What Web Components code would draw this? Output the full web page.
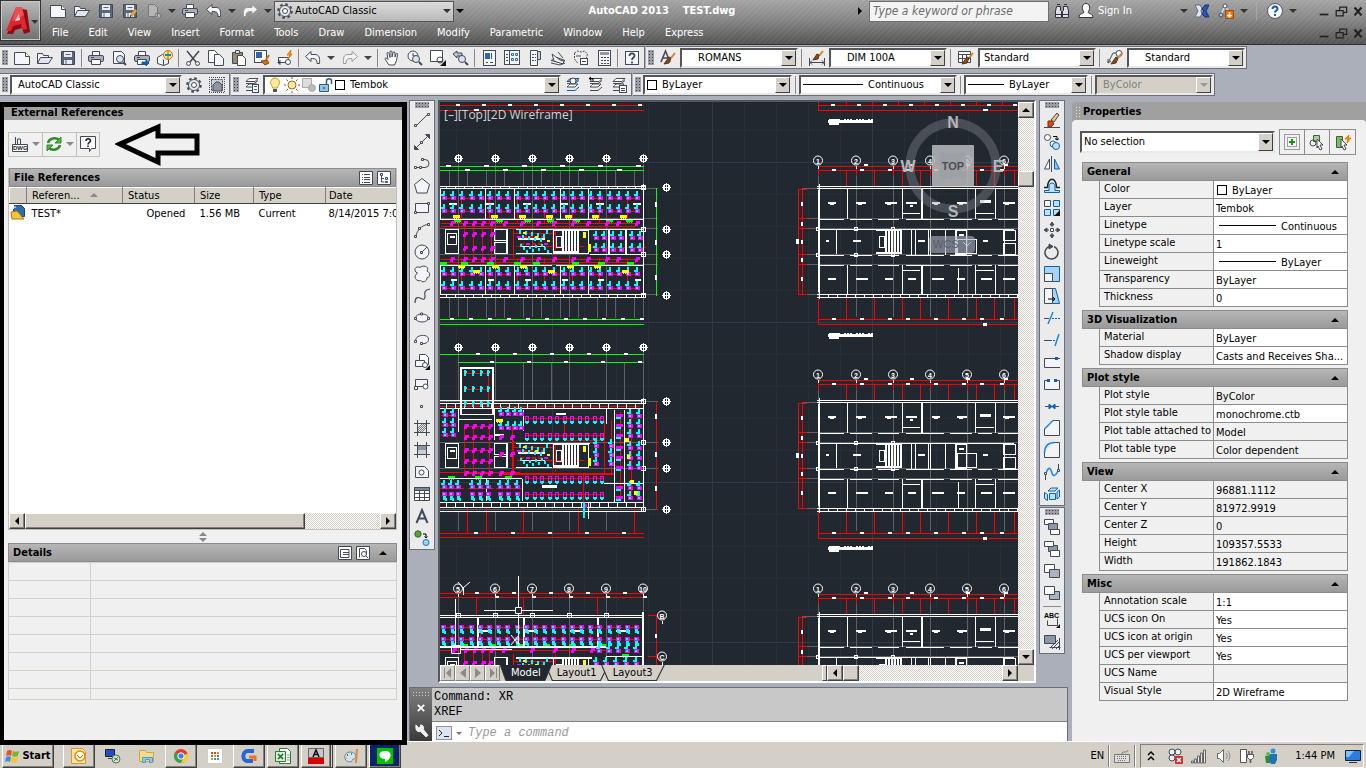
<!DOCTYPE html>
<html lang="en">
<head>
<meta charset="utf-8">
<title>AutoCAD 2013 - TEST.dwg</title>
<style>
  * { box-sizing: border-box; }
  body {
    margin: 0;
    height: 100vh;
    display: flex;
    flex-direction: column;
    overflow: hidden;
    background: #abafb9;
    color: #000;
    font: 11px/14px "DejaVu Sans Condensed", "Open Sans", "Liberation Sans", sans-serif;
  }
  .bars { display: flex; flex-direction: column; gap: 4px; padding-top: 1px; }
  .bar-row { display: flex; gap: 1px; height: 23px; }
  .work { flex: 1; display: flex; min-height: 0; gap: 2px; padding-top: 4px; }
  .center { flex: 1; min-width: 0; display: flex; flex-direction: column; gap: 4px; }
  .stage { flex: 1; min-height: 0; display: flex; gap: 3px; align-items: flex-start; padding-right: 5px; }
  .stack { display: flex; flex-direction: column; gap: 1px; }
  drawing-window { flex: 1; align-self: stretch; min-width: 0; }
  .line { display: inline-block; height: 1px; background: #000; }
  .swatch { display: inline-block; width: 10px; height: 10px; border: 1px solid #000; background: #fff; }
</style>
</head>
<body>

<title-bar></title-bar>

<div class="bars">
  <div class="bar-row">
    <tool-bar items="new open save | print preview publish dwf | cut copy paste match blockedit | undo v redo v | pan zoom zoomwin zoomprev | props dc palettes sheets markup calc | help"></tool-bar>
    <tool-bar>
      <cad-icon name="textstyle"></cad-icon>
      <combo-box label="Text style" value="ROMANS" style="width:118px;--indent:14px"></combo-box>
      <tool-sep></tool-sep>
      <cad-icon name="dimstyle"></cad-icon>
      <combo-box label="Dimension style" value="DIM 100A" style="width:118px;--indent:14px"></combo-box>
      <tool-sep></tool-sep>
      <cad-icon name="tablestyle"></cad-icon>
      <combo-box label="Table style" value="Standard" style="width:118px"></combo-box>
      <tool-sep></tool-sep>
      <cad-icon name="leaderstyle"></cad-icon>
      <combo-box label="Multileader style" value="Standard" style="width:118px;--indent:14px"></combo-box>
    </tool-bar>
  </div>
  <div class="bar-row">
    <tool-bar items="gear wsgear">
      <combo-box slot="start" label="Workspace" value="AutoCAD Classic" style="width:172px;--indent:4px"></combo-box>
    </tool-bar>
    <tool-bar items="laycur layprev laystate">
      <cad-icon slot="start" name="layers"></cad-icon>
      <combo-box slot="start" label="Layer" value="Tembok" style="width:298px">
        <cad-icon name="bulb"></cad-icon><cad-icon name="sun"></cad-icon><cad-icon name="freeze"></cad-icon><cad-icon name="lock"></cad-icon><span class="swatch"></span>
      </combo-box>
    </tool-bar>
    <tool-bar>
      <combo-box label="Color" value="ByLayer" style="width:149px;--indent:2px"><span class="swatch"></span></combo-box>
      <tool-sep></tool-sep>
      <combo-box label="Linetype" value="Continuous" style="width:158px"><span class="line" style="width:60px"></span></combo-box>
      <tool-sep></tool-sep>
      <combo-box label="Lineweight" value="ByLayer" style="width:124px"><span class="line" style="width:36px"></span></combo-box>
      <tool-sep></tool-sep>
      <combo-box label="Plot style" value="ByColor" disabled style="width:118px;--indent:4px"></combo-box>
    </tool-bar>
  </div>
</div>

<div class="work">
  <xref-palette></xref-palette>
  <div class="center">
    <div class="stage">
      <tool-bar vertical items="line xline pline polygon rect arc circle cloud spline ellipse earc insert block point hatch gradient region table text addsel"></tool-bar>
      <drawing-window></drawing-window>
      <div class="stack">
        <tool-bar vertical items="erase copyobj mirror offset array move rotate scale stretch trim extend breakpt break join chamfer fillet blend explode"></tool-bar>
        <tool-bar vertical items="front back above under | abc hatchback"></tool-bar>
      </div>
    </div>
    <command-line></command-line>
  </div>
  <properties-palette></properties-palette>
</div>

<task-bar></task-bar>

<script>
// ---------------------------------------------------------------- icons
const PAGE = '<path fill="#f4f6fa" d="M.5 2.5h11l4 4v8H.5z"/><path fill="#fff" d="M11.5 2.5v4h4"/>';
const DISK = '<path fill="#5a6578" d="M1.5 1.5h13v13h-13z"/><path fill="#e9edf3" stroke="none" d="M4 2h8v5H4zM4 10h8v4H4z"/><path d="M5.5 4.5h5M6 10v4" stroke="#5a6578"/>';
const PRINTER = '<path fill="#fff" d="M4.5 5.5v-4h7v4"/><rect x=".5" y="5.5" width="15" height="6" rx="1.5" fill="#a9b0bd"/><path fill="#fff" d="M3.5 9.5h9v5h-9zM3 7.5h3"/>';
const UNDO = '<path fill="#f2f4f8" d="M.5 6.5L6 1.500v3h4c4 0 5 3 4.5 9H12c0-4-1-5-6-5v3z"/>';
const MAG = '<circle cx="9" cy="9" r="3.5" fill="#d5e6f2"/><path stroke-width="2" d="M12 12l3 3"/>';
const BRUSH = '<path stroke="#d9822b" stroke-width="2" d="M15 3l-4 5"/><path fill="#8a4a1c" stroke="#5d3010" d="M11 8l-2-1-5 7 5-1z"/>';
const SHEETS = (top, mid, ink) => `<path fill="${top}" d="M5 1.5h9l-3 3H2z"/><path fill="${mid}" d="M3.5 8.5L5 7h8l-3 3H2z"/><path stroke="${ink}" d="M2 13.5h8l4-3.5M2 6.5h8l4-3"/>`;
const WINBOX = (inner) => `<rect x="2.5" y=".5" width="12" height="15" fill="#f4f6fa"/>${inner}`;
const GEAR = '<circle cx="8" cy="8" r="6.8" stroke-dasharray="2.7 2.64" stroke-width="2"/><circle cx="8" cy="8" r="5.5" fill="#e6e9ee"/><circle cx="8" cy="8" r="2.5" fill="#fff"/>';

const ICONS = {
  new: PAGE,
  open: '<path fill="#f2f4f8" d="M.5 13.5v-10h5l1 2h5v2"/><path fill="#e0e5ee" d="M.5 13.5l3-6h12l-4 6z"/>',
  save: DISK,
  saveas: DISK + '<path stroke="#e9a13a" stroke-width="3" d="M14 7l-5 6"/><path stroke="#5d3010" d="M8 15l1-3"/>',
  plotgray: '<path fill="#b5b5b5" stroke="#777" d="M2.5 1.5h6l3 3v9h-9zM10 10l5 1-1 4H8z"/>',
  print: PRINTER,
  preview: '<path fill="#f4f6fa" d="M2.5 13.5v-12h8l3 3v9z"/>' + MAG,
  publish: PRINTER + '<path fill="#0b62b5" stroke="#0b62b5" d="M8 12h4v-2l3 3-3 3v-2H8z"/>',
  dwf: '<path fill="#f4f6fa" d="M.5 7.5l5-3 6 3v6l-5 2-6-2z"/><path d="M6.5 9.5v6"/><circle cx="11" cy="5" r="4.5" fill="#ffe37a" stroke="#d66a20"/><path stroke="#1c7fd0" stroke-width="2" d="M8 5h6"/><path stroke="#2e9e3a" d="M11 1v8"/>',
  cut: '<path d="M2 1l9 11M14 1L5 12" stroke-width="1.5"/><circle cx="3.5" cy="13.5" r="2"/><circle cx="12.5" cy="13.5" r="2"/>',
  copy: '<path fill="#fff" d="M.5.5h6l3 3v9h-9z"/><path fill="#f4f6fa" d="M6.500 4.5h5l4 4v7h-9z"/>',
  paste: '<path fill="#9a8a72" d="M1.5 2.5h10v11h-10z"/><path fill="#ddd" d="M4.5.5h4v3h-4z"/><path fill="#fff" d="M6.5 5.5h5l3 3v7h-8z"/>',
  match: '<rect x=".5" y=".5" width="12" height="12" fill="#fff"/><path fill="#2c66b0" stroke="none" d="M2 2h6v6H2z"/><path stroke="#c9731f" stroke-width="2" d="M15 5l-3 5"/><path fill="#c9731f" stroke="#8a4a1c" d="M7 11l6-1 2 3-4 2z"/>',
  blockedit: '<path fill="#f4f6fa" d="M1.5 7.5h10v5h-10z"/><path d="M3 14.5l-2-2 2-2z" fill="#444"/><circle cx="11" cy="12" r="2.5" fill="#fff"/><path fill="#f7a21b" stroke="#e07800" d="M14 0l-4 5h3l-2 4 4-5h-2z"/>',
  undo: UNDO,
  redo: `<g transform="matrix(-1 0 0 1 16 0)" stroke="#999">${UNDO}</g>`,
  pan: '<path fill="#fff" d="M5 15L1 9c0-1 1-1.5 2-.5l1 1-1-6c0-1.5 1.5-1.5 2 0l1 4V2c0-1.5 2-1.5 2 0v5l1-4c0-1.5 2-1.5 2 0v4l1-3c.5-1 2-1 1.5.5l-1 6-2 4.5z"/>',
  zoom: '<circle cx="6" cy="6" r="5" fill="#f4f6fa"/><path d="M6 3v3h3"/>' + MAG,
  zoomwin: '<path fill="#fff" d="M.5.5h12v11H.5z"/><circle cx="10" cy="10" r="3"/><path fill="#111" stroke="none" d="M16 10v6h-6z"/>',
  zoomprev: '<path fill="#bcc2cd" d="M0 4l4-3v2h5v3H4v2z"/>' + MAG,
  props: WINBOX('<path fill="#2c66b0" stroke="none" d="M4 3h5v6H4z"/><path d="M10.5 3v6M5 12.5h2M9 12.5h3"/>'),
  dc: '<rect x=".5" y=".5" width="15" height="14" fill="#f4f6fa"/><path d="M5.5 1v13M2 4.5h2M2 7.5h2M2 10.5h2"/><path stroke="#2c66b0" d="M7.5 3.5h2v2h-2zM11.5 3.5h2v2h-2zM7.5 8.5h2v2h-2zM11.5 8.5h2v2h-2z"/>',
  palettes: '<path fill="#f4f6fa" d="M3.5.5h7v15h-7z"/><path fill="#ccd1da" d="M10.5 1.5h3v8h-3z"/><path d="M5 4.5h4M5 7.5h4M5 10.5h4" stroke-dasharray="2 1"/>',
  sheets: '<path fill="#dfe4ec" d="M1 10.5l9 2 5-2-8-3z"/><path fill="#f4f6fa" d="M2 4l8 6 4 1-1 3-9-3zM8 2l5 6"/><path d="M1 13l9 2 5-2"/>',
  markup: '<path stroke-dasharray="2 1" d="M1.5 3l3-2 4 1 3-1 3 3-1 4M1.5 3v6l3 4"/><rect x="7.5" y="8.5" width="7" height="6" fill="#fff"/><path d="M3 6h5M9 11.5h4"/>',
  calc: WINBOX('<path fill="#8d97a8" stroke="none" d="M4 2h9v3H4z"/><path stroke-dasharray="2 1" d="M5 7.5h8M5 10.5h8M5 13.5h8"/>'),
  help: '<rect x="1.5" y="1.5" width="13" height="13" fill="#f4f6fa"/><path stroke-width="1.8" d="M5.5 6c0-3.5 5-3.5 5 0 0 1.5-2.5 1.5-2.5 4M8 11.5v2"/>',
  textstyle: '<path stroke-width="1.6" d="M1 12L5.5 1 10 12M3 8h5"/>' + BRUSH,
  dimstyle: '<path d="M.5 8v8M15.5 8v8M1 12.5h14M3 10.5l-2 2 2 2M13 10.5l2 2-2 2"/><path stroke="#d9822b" stroke-width="2" d="M14 1l-4 5"/><path fill="#8a4a1c" stroke="#5d3010" d="M10 5L8 4l-4 6 5-1z"/>',
  tablestyle: '<path fill="#fff" d="M.5 1.5h12v11H.5z"/><path d="M.5 4.5h12M.5 8.5h12M4.5 4v9M8.5 4v9"/>' + BRUSH,
  leaderstyle: '<circle cx="12" cy="3.5" r="3" fill="#fff"/><path d="M9 3H6L1 13M1 9v4l3-2"/>' + BRUSH,
  gear: GEAR,
  wsgear: '<rect x="2.5" y="2.5" width="11" height="11" fill="#cdd2da" stroke-dasharray="2 1"/><path fill="#8e96a3" d="M4 14V8l3-3h3l3 3v6z"/><path stroke-dasharray="1 1" d="M0 .5h16M0 15.5h16M.5 0v16M15.5 0v16"/>',
  layers: SHEETS("#fff", "#fff", "#434a57") + '<rect x="8.5" y="7.5" width="6" height="8" fill="#fff"/><path stroke="#1c6fc4" d="M10 9.5h3M10 12.5h3"/>',
  laycur: SHEETS("#6fb6ee", "#fff", "#0b62b5") + '<circle cx="8" cy="4" r="3" fill="#eef3f8"/>',
  layprev: SHEETS("#fff", "#fff", "#434a57") + '<path stroke="#000" d="M5 4V1.5H1M3 0L1 1.5 3 3"/>',
  laystate: SHEETS("#fff", "#fff", "#434a57") + '<rect x="8.5" y="8.5" width="7" height="7" fill="#fff"/><path d="M10 11.5h4M10 13.5h4"/>',
  bulb: '<path fill="#ffe89a" stroke="#c79a28" d="M5.5 11c0-2-2-3-2-5.500a4.5 4.5 0 0 1 9 0c0 2.5-2 3.5-2 5.500z"/><path fill="#555" stroke="#444" d="M6.5 12.5h3v2h-3z"/>',
  sun: '<circle cx="8" cy="8" r="4" fill="#ffe89a" stroke="#8c7430"/><path stroke="#6b5a2a" d="M8 0v2M8 14v2M0 8h2M14 8h2M2.5 2.5L4 4M12 12l1.5 1.5M13.5 2.5L12 4M4 12l-1.5 1.5"/>',
  freeze: '<g stroke="#aaa"><path fill="#ddd" d="M1.5 1.5h9v9h-9z"/><circle cx="11" cy="11" r="3.5" fill="#bbb"/></g>',
  lock: '<path fill="#8fc6e8" stroke="#2b5f86" d="M1.5 7.5h9v7h-9z"/><path stroke="#2b5f86" stroke-width="1.5" d="M8.5 7V4c0-3 5-3 5 0v3"/><path stroke="#123" d="M6 10v2"/>',
  line: '<path d="M2.5 13.5l11-11"/><path fill="#fff" d="M.5 12.5h2v2h-2zM13.5 1.5h2v2h-2z"/>',
  xline: '<path d="M2 14L14 2"/><path fill="#434a57" d="M.5 15.5v-4l4 4zM15.5.5v4l-4-4z"/><path fill="#fff" d="M6.5 7.5h2v2h-2z"/>',
  pline: '<path d="M2 11.500h9a4 4 0 0 0 0-8H9"/><path fill="#fff" d="M.5 10.5h2v2h-2zM7.5 2.5h2v2h-2zM5.5 10.5h2v2h-2z"/>',
  polygon: '<path fill="#f2f4f7" d="M8 .5l7.500 6-2.5 8.500H3L.5 6.5z"/>',
  rect: '<path fill="#f2f4f7" d="M1.5 3.5h13v9h-13z"/><path fill="#fff" d="M.5 11.5h2v2h-2zM13.5 2.5h2v2h-2z"/>',
  arc: '<path d="M2 14C3 8 8 3 14 2.5"/><path fill="#fff" d="M.5 13.5h2v2h-2zM4.500 5.500h2v2h-2zM13.5 1.5h2v2h-2z"/>',
  circle: '<circle cx="8" cy="8" r="7" fill="#f2f4f7"/><path d="M8 8l5-5"/><path fill="#fff" d="M6.5 7.5h2v2h-2z"/>',
  cloud: '<path fill="#f2f4f7" d="M3.500 7C-1.500 5 1.5-1 6 1.500c3-3 10-1 7 3.500 4 1.500 3 7 0 6.500 0 5-5 5-6.500 3C3 16-2 11 3.500 7z"/>',
  spline: '<path d="M1 15c0-6 3-6 5-5s5 3 5-2c-1-4 0-6 5-7" stroke-width="1.2"/>',
  ellipse: '<ellipse cx="8" cy="8" rx="6.5" ry="4" fill="#f2f4f7"/><path fill="#fff" d="M.5 7.500h2v2h-2zM13.5 7.500h2v2h-2zM6.500 3h2v2h-2z"/>',
  earc: '<path fill="#f2f4f7" d="M2 9C0 3 14 1 14.5 7c0 4-4 5-7 4.5"/><path fill="#fff" d="M.5 8.500h2v2h-2zM6.5 10.5h2v2h-2z"/>',
  insert: '<path fill="#fff" d="M5.5.5h6l3 3v7h-9z"/><path fill="#f2f4f7" d="M1.5 6.5h9v6h-9z"/><circle cx="11" cy="11" r="2.5" fill="#fff"/><path fill="#111" stroke="none" d="M16 11v5h-5z"/>',
  block: '<path fill="#f2f4f7" d="M1.5 3.5h12v7h-12z"/><circle cx="11.5" cy="10.5" r="2.5" fill="#fff"/><path fill="#fff" d="M.5 10.5h3v3h-3z"/>',
  point: '<path fill="#fff" d="M6.500 7.500h2v2h-2z"/>',
  hatch: '<path d="M4 12l8-8M4 8l4-4M8 12l4-4M4 10l6-6M6 12l6-6" stroke="#777"/><path d="M3.5 0v16M12.5 0v16M0 3.5h16M0 12.5h16"/>',
  gradient: '<path fill="#8d95a1" d="M3.5 3.5h9v9h-9z"/><path fill="#c9ced6" stroke="none" d="M4 8h8v4H4z"/><path d="M3.5 0v16M12.5 0v16M0 3.5h16M0 12.5h16"/>',
  region: '<path fill="#f2f4f7" d="M1.5 2.5h9l4 4v7h-13z"/><circle cx="7.5" cy="8.5" r="2.5" fill="#fff"/>',
  table: '<path fill="#fff" d="M.5 1.5h15v13H.5z"/><path fill="#7d8694" d="M.5 1.5h15v3H.5z"/><path d="M.5 7.5h15M.5 11.5h15M5.5 4v10M10.5 4v10"/>',
  text: '<path stroke-width="2" d="M2.5 15L8 2l5.5 13M4.5 10.5h7"/>',
  addsel: '<circle cx="4" cy="4" r="3.2" fill="#5a9c46" stroke="#2f6b22"/><circle cx="12" cy="12.5" r="3" fill="#9fd2f5" stroke="#1c6fc4"/><path stroke="#000" d="M9 4h3v4M10.5 6.5L12 8l1.5-1.5"/>',
  erase: '<path d="M0 15.5h16"/><path fill="#f0c07a" d="M7 8l6-7 2 2-5 7z"/><path fill="#d8491c" stroke="#7a2a10" d="M4 9h4l2 3-3 3H4z"/>',
  copyobj: '<circle cx="3.5" cy="3.5" r="3" fill="#fff"/><circle cx="9" cy="10" r="3" stroke="#0b62b5" fill="#fff"/><circle cx="12" cy="12" r="3.5" stroke="#0b62b5" fill="#bfe0f8"/><path stroke="#000" d="M9 2.5h4V6M11 4.5L13 6l2-1.500"/>',
  mirror: '<path d="M7.5 0v16"/><path fill="#fff" d="M5.5 3v10H.5z"/><path stroke="#0b62b5" fill="#8cc4ee" d="M10.5 3v10h5z"/>',
  offset: '<path stroke="#222" stroke-width="1.5" d="M0 9.500h3.500c0-11 9-11 9 0H16"/><path stroke="#0b62b5" fill="#bfe0f8" d="M.5 14.5h15v-2H11V8c0-4-6-4-6 0v4.500H.5z"/>',
  array: '<path fill="#f2f4f7" d="M.5.5h6v6h-6z"/><path stroke="#0b62b5" fill="#bfe0f8" d="M9.5.5h6v6h-6zM.5 9.5h6v6h-6zM9.5 9.5h6v6h-6z"/><path fill="#111" stroke="none" d="M16 10v6h-6z"/>',
  move: '<path fill="#fff" d="M6.5 6.5h3v3h-3z"/><path fill="#434a57" d="M8 0l2 3H6zM8 16l2-3H6zM0 8l3-2v4zM16 8l-3-2v4z"/><path d="M8 2v3M8 11v3M2 8h3M11 8h3"/>',
  rotate: '<path stroke-width="1.5" d="M10 2.5a6.500 6.500 0 1 1-5 0"/><path fill="#434a57" d="M5 0l4 2.5L5 5z"/>',
  scale: '<path stroke="#0b62b5" fill="#a8d3f3" d="M.5.5h15v15H.5z"/><path fill="#f2f4f7" d="M.5 7.5h8v8h-8z"/>',
  stretch: '<path stroke="#0b62b5" fill="#a8d3f3" d="M8.5.5h3l4 15h-7z"/><path fill="#f2f4f7" d="M.5.5h8v15h-8z"/><path stroke="#000" d="M4 11h7M9 9l2 2-2 2"/>',
  trim: '<path d="M0 8.500h5"/><path stroke="#0b62b5" stroke-dasharray="2 1" d="M8 8.500h8"/><path stroke="#1c86e0" stroke-width="1.5" d="M4 14L9 2"/>',
  extend: '<path d="M0 8.500h6"/><path stroke="#0b62b5" stroke-dasharray="2 1" d="M6 8.500h5"/><path stroke="#1c86e0" stroke-width="1.5" d="M11 14l4-12"/>',
  breakpt: '<path fill="#f2f4f7" stroke="none" d="M0 4h16v10H0z"/><path d="M16 13.5H.5v-9H16"/><path fill="#0b62b5" stroke="none" d="M11 3h3v3h-3z"/>',
  break: '<path fill="#f2f4f7" stroke="none" d="M0 4h16v10H0z"/><path d="M4 4.5H.5v9h15v-9H12"/><path fill="#0b62b5" stroke="none" d="M3 3h3v3H3zM10 3h3v3h-3z"/>',
  join: '<path d="M1 8.5h14"/><path fill="#0b62b5" stroke="#0b62b5" d="M5 6l3 2.5L5 11zM11 6L8 8.5l3 2.5z"/>',
  chamfer: '<path fill="#f2f4f7" d="M9 .5h6.5v15H.5V9"/><path stroke="#1c86e0" stroke-width="1.5" d="M.5 9L9 .5"/>',
  fillet: '<path fill="#f2f4f7" d="M11 .5h4.5v15H.5V11"/><path stroke="#1c86e0" stroke-width="1.5" d="M.5 11C.5 4 4 .5 11 .5"/>',
  blend: '<path d="M1.500 16V9M14.500 0v7"/><path stroke="#1c86e0" stroke-width="1.5" d="M2 9c3-8 5-4 6 0s4 3 6-2"/><path fill="#fff" d="M.5 8.500h2v2h-2zM13.5 5.500h2v2h-2z"/>',
  explode: '<path stroke="#0b62b5" fill="#bfe0f8" d="M5.5 7.5h6v6h-6zM.5 6.500l3 2v6l-3-2zM13 6l2.500-2v7L13 13zM4 5l3-3h7l-3 3z"/>',
  front: '<path fill="#fff" d="M.5.5h9v5h-9zM9.5 10.5h6v5h-9v-5z"/><path fill="#8d97a8" d="M4.5 4.5h9v6h-9z"/>',
  back: '<path fill="#8d97a8" d="M4.5 4.5h9v6h-9z"/><path fill="#fff" d="M.5.5h9v5h-9zM6.5 9.5h9v6h-9z"/>',
  above: '<path fill="#fff" d="M.5 1.5h10v8H.5z"/><path fill="#aab2bf" d="M5.5 6.5h10v8h-10z"/>',
  under: '<path fill="#aab2bf" d="M5.5 6.5h10v8h-10z"/><path fill="#fff" d="M.5 1.5h10v8H.5z"/>',
  abc: '<path d="M3.5 8.5v5h10v-7"/><path fill="#111" stroke="none" d="M16 12v4h-4z"/><text x="0" y="6" font-size="7" font-weight="bold" fill="#000" stroke="none">ABC</text>',
  hatchback: '<path d="M6 14l8-8M8 15l7-7M12 15l3-3M5.5 13.5h11M15.5 4v12"/><path fill="#8d97a8" d="M.5 1.5h11v8H.5z"/>',
  binoc: '<path fill="#dde" stroke="#333" d="M2.5 3.5h4v4l1 1v6h-6V8zM13.5 3.5h-4v4l-1 1v6h6V8z"/><path stroke="#333" d="M3 1.5h3M10 1.5h3M2 11.5h5M9 11.5h5"/>',
  user: '<path fill="#fff" stroke="#333" d="M8 .5c5 0 4 7 2 8.500 0 2 5 1 5 5.500H1C1 10 6 11 6 9 4 7.5 3 .5 8 .5z"/>',
  exchange: '<path fill="#e4e8f0" stroke="#5b6a8a" d="M1 2h5l2 3-1 3 1 3-2 3H1l3-6z"/><path fill="#2d55b8" stroke="#16307c" d="M15 2h-4L8 6l2 2-2 3 3 3h4l-3-6z"/>',
  cloudapp: '<path stroke="#ddd" stroke-width="1.5" d="M3 12l4-9 4 6"/><circle cx="7" cy="3" r="2" fill="#fff"/><circle cx="3" cy="12" r="2" fill="#9cf"/><rect x="7.5" y="7.5" width="8" height="8" fill="#e8720c" stroke="#a54a00"/><path stroke="#fff" stroke-width="1.5" d="M11.5 9v5M9.5 12l2 2 2-2"/>',
  helpball: '<circle cx="8" cy="8" r="7.5" fill="#f6f8fb" stroke="#556"/><path stroke="#1b56b5" stroke-width="2" d="M5.5 6c0-3.5 5-3.5 5 0 0 1.5-2.5 1.5-2.5 3.5M8 11v2"/>',
  min: '<path stroke="#222" stroke-width="2" d="M3 12h10"/>',
  restore: '<path stroke="#222" stroke-width="1.4" d="M6.5 7V3.5h8v6H11M2.5 7.5h8v6h-8z"/>',
  close: '<path stroke="#222" stroke-width="2.5" d="M4 4l8 9M12 4l-8 9"/>',
  attach: '<path d="M3.5 1v8h5V3h-3v5"/><path fill="#fff" d="M.5 8.5h15v7H.5z"/><text x="1" y="14" font-size="6" font-weight="bold" fill="#222" stroke="none">DWG</text>',
  refresh: '<path stroke="#2f8a2a" stroke-width="2.5" d="M2 7c1-5 8-6 11-3M14 9c-1 5-8 6-11 3"/><path fill="#58b24a" stroke="#2f8a2a" d="M15 1v6H9zM1 15V9h6z"/>',
  balloon: '<path fill="#f8f9fb" d="M.5.5h15v12h-4l-2 3v-3h-9z"/><path stroke="#222" stroke-width="1.5" d="M6 5c0-3 4.5-3 4.5 0 0 1.5-2.5 1.5-2.5 3.5M8 9.5v1.500"/>',
  listview: '<path fill="#fff" d="M1.5 1.5h13v13h-13z"/><path d="M4 4.5h1M6 4.5h6M4 7.5h1M6 7.5h6M4 9.5h1M6 9.5h6M4 12.5h1M6 12.5h6"/>',
  tree: '<path fill="#fff" d="M1.5 1.5h13v13h-13z"/><path d="M4.5 3.5h2v2h-2zM5.5 6v6h3M6 8.5h2M9.5 7.5h2v2h-2zM9.5 11.5h2v1h-2z"/>',
  detail: '<path fill="#fff" d="M1.5 1.5h13v13h-13z"/><path d="M12 4.5H3.5v8H12zM6 7.5h6M6 9.5h6"/>',
  detailprev: '<path fill="#fff" d="M1.5 1.5h13v13h-13z"/><path d="M4.5 12.5v-9h5l2 2v4"/><circle cx="9" cy="9" r="2.5"/><path d="M11 11l2 2"/>',
  dwgfile: '<path fill="#2f6cae" stroke="#1b4474" d="M3.5 1.5h8l3 3v8h-11z"/><path fill="#f6c33a" stroke="#a8781a" d="M1 8l6-1 7 8H2z"/><path stroke="#fff" d="M1 3h5M3.5 1v4"/>',
  quick: '<rect x=".5" y=".5" width="15" height="15" stroke-dasharray="1 1"/><rect x="3.5" y="3.5" width="9" height="9" stroke-dasharray="1 1" fill="#fff"/><path stroke="#0a9a0a" stroke-width="2" d="M8 5v6M5 8h6"/>',
  selobj: '<path fill="#a8cf98" stroke="#2f6b22" d="M4.5 1.5h6v6h-6z"/><circle cx="4" cy="9" r="3"/><path fill="#fff" d="M8 5l6 6h-3l2 4-2 1-2-4-1 2z"/>',
  qselect: '<path fill="#7fb86a" stroke="#2f6b22" d="M1.5 2.5h6v11h-6z"/><path fill="#fff" d="M6 5l6 6H9l2 4-2 1-2-4-1 2z"/><path fill="#f7a21b" stroke="#e07800" d="M14 1l-4 4h3l-1 4 4-5h-3z"/>',
  prompt: '<rect x=".5" y="1.5" width="15" height="13" fill="#dde4ee" stroke="#8795aa"/><path stroke="#223" d="M3 5l3 3-3 3M8 11.5h5"/>',
  wrench: '<path fill="#f2f2f2" stroke="#f2f2f2" d="M2 2l3 3 2-1V2c3 0 4 3 3 5l5 6-2 2-6-6c-3 1-5-1-5-4z"/>',
  winflag: '<g stroke="none"><path fill="#e2552a" d="M2 3c2-1.500 3-1 5 0L6 8C4 7 3 7 1 8z"/><path fill="#76b82a" d="M8 3c2 1 4 1 6 0l-1 5c-2 1-4 1-6 0z"/><path fill="#3a8fd8" d="M1 9c2-1 3-1 5 0l-1 5c-2-1-3-1-5 0z"/><path fill="#f7c52c" d="M7 9c2 1 4 1 6 0l-1 5c-2 1-4 1-6 0z"/></g>',
  outlook: '<path fill="#fbe6a8" stroke="#d59a28" d="M.5.5h11l3 3v12H.5z"/><circle cx="9" cy="8" r="5" fill="#fff7df" stroke="#e08a1a" stroke-width="1.5"/><path stroke="#c96a10" d="M6 7l3 3 3-3"/>',
  remote: '<path fill="#1f4fc4" stroke="#223" d="M.5 1.5h9v7h-9z"/><path d="M3 10.5h5"/><circle cx="11" cy="11" r="4" fill="#cde8c8" stroke="#667"/><path stroke="#2f8a2a" d="M9 10l2 1-2 2M13 9l-2 2 2 1"/>',
  explorer: '<path fill="#f4dc8a" stroke="#caa648" d="M.5 2.5h6l1 2h7v9H.5z"/><path fill="#8fcbe8" stroke="#4d9ac4" d="M3.5 14.5v-5h10v5h-3v-3h-4v3z"/>',
  chrome: '<circle cx="8" cy="8" r="7" fill="#e23b2e" stroke="none"/><path fill="#f7cf2c" stroke="none" d="M8 8l7-2.5A7 7 0 0 1 8 15z"/><path fill="#36a64a" stroke="none" d="M8 8L2 4.5A7 7 0 0 0 8 15l2-4z"/><circle cx="8" cy="8" r="3.2" fill="#3d80e8" stroke="#fff"/>',
  apps: '<path fill="#fff" stroke="#ccc" d="M.5.5h15v15H.5z"/><path stroke="#e23b2e" stroke-width="2" d="M4 5h2M7 5h2"/><path stroke="#3d80e8" stroke-width="2" d="M10 8h2M10 11h2"/><path stroke="#36a64a" stroke-width="2" d="M4 8h2M7 11h2"/><path stroke="#f08c1c" stroke-width="2" d="M10 5h2M7 8h2M4 11h2"/>',
  gstar: '<path stroke="#2468d8" stroke-width="4" d="M13 3H7C1 3 1 13 6 13h6"/><path stroke="#f0701c" stroke-width="3" d="M8 9h6v4"/>',
  excel: '<path fill="#fff" stroke="#2f7a34" d="M4.5.5h8l3 3v12h-11z"/><path fill="#d6ecd6" stroke="#2f7a34" d="M.5 3.500h10v10H.5z"/><path stroke="#1c6a24" stroke-width="1.5" d="M3 6l5 5M8 6l-5 5"/><path stroke="#7ab87c" d="M12 7h3M12 9.5h3M12 12h3"/>',
  acad: '<path fill="#c8c8c8" stroke="#666" d="M.5.5h15v9H.5z"/><path fill="#d80000" stroke="none" d="M0 10h16v6H0z"/><path stroke="#111" stroke-width="1.5" d="M5 9l3-7 3 7M6 6.5h4"/>',
  paint: '<path fill="#cfe4f2" stroke="#5d8cad" d="M7 4C0 4 0 14 7 14c3 0 1-3 4-3s3-7-4-7z"/><path stroke="#d33" stroke-width="2" d="M4 7h1"/><path stroke="#3a3" stroke-width="2" d="M8 6h1"/><path stroke="#fb2" stroke-width="2" d="M3 10h1"/><path stroke="#d98a3a" stroke-width="2" d="M14 1l-1 14"/>',
  chat: '<path fill="#00c300" stroke="none" d="M0 0h16v16H0z"/><path fill="#fff" stroke="none" d="M8 3c8 0 7 8 0 11v-3C1 11 0 3 8 3z"/>',
  keyboard: '<path stroke="#777" d="M8 6c0-4 5 0 6-4"/><path fill="#ddd" stroke="#777" d="M.5 6.5h15v8H.5z"/><path stroke="#777" stroke-dasharray="1 1" d="M3 8.5h10M3 10.5h10M4 12.5h8"/>',
  chevrons: '<path stroke="#000" stroke-width="1.5" d="M5 7l3-3 3 3M5 12l3-3 3 3"/>',
  action: '<circle cx="5" cy="4" r="3" fill="#eee"/><circle cx="11" cy="4" r="3" fill="#eee"/><circle cx="5" cy="10" r="3" fill="#eee"/><rect x="8" y="8" width="8" height="8" rx="1" fill="#d9282a" stroke="none"/><path stroke="#fff" stroke-width="1.5" d="M10 10l4 4M14 10l-4 4"/>',
  signal: '<path fill="#e8e8e8" stroke="#666" d="M.5 13v2h2v-2zM3.5 11v4h2v-4zM6.5 8v7h2V8zM9.5 5v10h2V5zM12.5 2v13h2V2z"/>',
  speaker: '<path fill="#fff" stroke="#666" d="M2.5 5.5h2l4-4v13l-4-4h-2z"/><path stroke="#888" d="M11 5c1.5 2 1.5 4 0 6M13 3c2.5 4 2.5 6 0 10"/>',
  power: '<path fill="#fff" stroke="#555" d="M1.5 1.5h6v13h-6zM8.5 6.5h6v3l-2 2h-2l-2-2z"/><path stroke="#555" stroke-width="1.5" d="M10 3v3M13 3v3M11.5 12v3"/>',
  people: '<g stroke="none"><circle cx="10" cy="3" r="2.5" fill="#2f8fd0"/><path fill="#1c74b8" d="M6 6h8v6l-2 4H8l-2-4z"/><circle cx="5" cy="6" r="2" fill="#5db85a"/><path fill="#2f8a3a" d="M2 8h5v7H3z"/></g>',
  desktop: '<path fill="#2c7be0" stroke="#123" d="M.5 2.5h15v10H.5z"/><path fill="#7fc0ff" stroke="none" d="M1 3h8l-5 6H1z"/><path stroke="#333" d="M4 14.5h8"/>',
};

class CadIcon extends HTMLElement {
  constructor() {
    super();
    this.attachShadow({ mode: "open" });
  }

  connectedCallback() {
    this.shadowRoot.innerHTML = `
      <style>
        :host { display: inline-flex; width: 16px; height: 16px; flex: none; }
        svg { width: 100%; height: 100%; overflow: visible; font-family: "Liberation Sans", sans-serif; }
      </style>
      <svg viewBox="0 0 16 16" fill="none" stroke="#434a57" aria-hidden="true">${ICONS[this.getAttribute("name")] || ""}</svg>
    `;
  }
}
customElements.define("cad-icon", CadIcon);

const icon = (name) => `<cad-icon name="${name}"></cad-icon>`;

class ToolSep extends HTMLElement {
  constructor() {
    super();
    this.attachShadow({ mode: "open" }).innerHTML = `
      <style>
        :host { display: block; flex: none; width: 1px; height: 18px; margin: 0 3px; background: #8a8a8a; }
      </style>
    `;
  }
}
customElements.define("tool-sep", ToolSep);

// ---------------------------------------------------------------- toolbars
class ToolBar extends HTMLElement {
  constructor() {
    super();
    this.attachShadow({ mode: "open" });
  }

  connectedCallback() {
    const items = (this.getAttribute("items") || "").split(" ").filter(Boolean);
    const html = items.map((name) => {
      if (name === "|") return '<i class="sep"></i>';
      if (name === "v") return '<button class="more" aria-label="History"><i></i></button>';
      return `<button aria-label="${name}">${icon(name)}</button>`;
    }).join("");

    this.shadowRoot.innerHTML = `
      <style>
        :host {
          display: flex;
          flex: none;
          align-items: center;
          box-sizing: border-box;
          background: #ebebeb;
          border: 1px solid #6c6e74;
          border-left-width: 0;
          padding-right: 1px;
        }
        .grip {
          align-self: stretch;
          box-sizing: border-box;
          width: 10px;
          flex: none;
          background: radial-gradient(circle, #3c3e44 30%, transparent 45%) 0 0 / 3px 3px content-box #9c9ea8;
          padding: 3px 2px;
        }
        button {
          display: flex;
          align-items: center;
          justify-content: center;
          width: 23px;
          height: 21px;
          padding: 0;
          border: 0;
          background: none;
        }
        button:hover { background: #cfe0f2; }
        .more { width: 14px; }
        .more i { border: 4px solid transparent; border-top-color: #444; border-bottom-width: 0; }
        .sep { width: 1px; height: 18px; margin: 0 2px; background: #8a8a8a; }
        ::slotted(cad-icon) { margin: 0 4px; }
        ::slotted(cad-icon[slot]) { margin: 0 3px; }
        :host([vertical]) { flex-direction: column; width: 26px; border-left-width: 1px; padding: 0; }
        :host([vertical]) .grip { width: auto; height: 8px; padding: 1px 5px; }
        :host([vertical]) button { height: 22px; }
        :host([vertical]) .sep { width: 18px; height: 1px; margin: 2px 0; }
      </style>
      <div class="grip"></div>
      <slot name="start"></slot>
      <slot></slot>
      ${html}
    `;
  }
}
customElements.define("tool-bar", ToolBar);

class ComboBox extends HTMLElement {
  constructor() {
    super();
    this.attachShadow({ mode: "open" });
  }

  connectedCallback() {
    this.shadowRoot.innerHTML = `
      <style>
        :host {
          display: flex;
          align-items: center;
          flex: none;
          height: 20px;
          box-sizing: border-box;
          padding-left: 2px;
          background: #fff;
          border: 2px solid;
          border-color: #55565a #e9e9e9 #e9e9e9 #55565a;
        }
        select {
          flex: 1;
          min-width: 0;
          appearance: none;
          border: 0;
          padding: 0 0 0 var(--indent, 2px);
          background: none;
          color: inherit;
          font: inherit;
          outline: 0;
        }
        .drop {
          width: 15px;
          align-self: stretch;
          box-sizing: border-box;
          display: flex;
          align-items: center;
          justify-content: center;
          pointer-events: none;
          background: #d4d0c8;
          border: 1px solid;
          border-color: #fff #404040 #404040 #fff;
        }
        .drop i { border: 4px solid transparent; border-top-color: #000; border-bottom-width: 0; }
        ::slotted(*) { flex: none; margin-right: 3px; }
        ::slotted(cad-icon) { margin-right: 1px; }
        :host([disabled]) { background: #d4d0c8; color: #808080; }
        :host([disabled]) select { opacity: 1; }
        :host([disabled]) .drop i { border-top-color: #999; }
      </style>
      <slot></slot>
      <select aria-label="${this.getAttribute("label")}" ${this.hasAttribute("disabled") ? "disabled" : ""}>
        <option>${this.getAttribute("value")}</option>
      </select>
      <span class="drop"><i></i></span>
    `;
  }
}
customElements.define("combo-box", ComboBox);

// ---------------------------------------------------------------- title and menu
const MENUS = ["File", "Edit", "View", "Insert", "Format", "Tools", "Draw", "Dimension", "Modify", "Parametric", "Window", "Help", "Express"];

class TitleBar extends HTMLElement {
  constructor() {
    super();
    this.attachShadow({ mode: "open" });
  }

  connectedCallback() {
    const btn = (name) => `<button aria-label="${name}">${icon(name)}</button>`;
    const wbtn = (name) => `<button class="win" aria-label="${name}">${icon(name)}</button>`;
    this.shadowRoot.innerHTML = `
      <style>
        * { box-sizing: border-box; }
        :host {
          display: flex;
          box-sizing: border-box;
          height: 45px;
          flex: none;
          color: #fff;
          background:
            repeating-linear-gradient(135deg, transparent 0 2px, rgba(255,255,255,.05) 2px 4px),
            linear-gradient(#a4a4a4, #858585 45%, #525252);
          border-bottom: 1px solid #2f3033;
        }
        button { display: flex; align-items: center; justify-content: center; padding: 0; border: 0; background: none; color: inherit; font: inherit; }
        .app {
          flex: none;
          width: 41px;
          height: 41px;
          background: linear-gradient(#b9b9b9, #707070);
          border: 1px solid #333;
          box-shadow: inset 0 0 0 1px #c9c9c9;
        }
        .app svg { width: 36px; height: 32px; }
        .rows { flex: 1; min-width: 0; display: flex; flex-direction: column; }
        .row { display: flex; align-items: center; height: 22px; }
        .quick { display: flex; align-items: center; padding-left: 5px; }
        .quick button { width: 24px; height: 20px; }
        .quick .v, .info .v { width: 12px; }
        .v i, .ws i { border: 4px solid transparent; border-top-color: #333; border-bottom-width: 0; }
        .ws {
          display: flex;
          align-items: center;
          width: 180px;
          height: 21px;
          padding: 0 2px;
          border: 1px solid #555;
          background: linear-gradient(#dcdcdc, #b9b9b9);
          color: #000;
        }
        .ws select { flex: 1; min-width: 0; appearance: none; border: 0; padding: 0 0 0 2px; background: none; font: inherit; color: inherit; }
        .title { flex: 1; text-align: center; white-space: pre; font-weight: bold; }
        .info { display: flex; align-items: center; }
        .info button { width: 24px; height: 20px; }
        .expand { border: 4px solid transparent; border-left-color: #000; border-right-width: 0; margin-right: 7px; }
        input {
          width: 180px;
          height: 21px;
          margin-right: 1px;
          padding: 0 3px;
          border: 1px solid #6f6f6f;
          background: #f3f3f3;
          font: italic 12px/14px "DejaVu Sans Condensed", "Open Sans", sans-serif;
        }
        input::placeholder { color: #6d6d6d; }
        a { color: #fff; text-decoration: none; width: 80px; }
        .rule { width: 1px; height: 18px; margin: 0 6px; background: #a8a8a8; }
        .info .win, .win { width: 17px; height: 20px; }
        .win cad-icon { width: 14px; height: 14px; }
        .gap { width: 16px; }
        nav { display: flex; flex: 1; padding-left: 1px; }
        nav button { padding: 0 10px; height: 20px; }
      </style>
      <button class="app" aria-label="Application menu">
        <svg viewBox="0 0 36 32">
          <path fill="#8e0d12" d="M4 29L15 3l9 2 3 22-6 2-2-6-7 2-2 4z"/>
          <path fill="#e0262c" d="M3 26L13 2h6l5 22-5 1-1-6-8 2-2 5z"/>
          <path fill="#f7f0f0" d="M12 16l4-8 1 7z"/>
          <path fill="#f26a6a" d="M13 2h6l2 8c-4 2-8 5-12 6z" opacity=".6"/>
          <path fill="#333" d="M28 15h7l-3 4z"/>
        </svg>
      </button>
      <div class="rows">
        <div class="row">
          <div class="quick">
            ${["new", "open", "save", "saveas", "plotgray"].map(btn).join("")}
            <button class="v" aria-label="More"><i></i></button>
            ${btn("print")}${btn("undo")}
            <button class="v" aria-label="Undo list"><i></i></button>
            ${btn("redo")}
            <button class="v" aria-label="Redo list"><i></i></button>
            <span class="ws">${icon("gear")}<select aria-label="Workspace"><option>AutoCAD Classic</option></select><i></i></span>
            <button class="v" aria-label="Customize"><i style="border-top-color:#000"></i></button>
          </div>
          <div class="title">AutoCAD 2013    TEST.dwg</div>
          <div class="info">
            <i class="expand"></i>
            <input aria-label="Search" placeholder="Type a keyword or phrase">
            ${btn("binoc")}${btn("user")}
            <a href="#">Sign In</a>
            <button class="v" aria-label="Account"><i></i></button>
            ${btn("exchange")}${btn("cloudapp")}
            <button class="v" aria-label="Apps"><i></i></button>
            <i class="rule"></i>
            ${btn("helpball")}
            <button class="v" aria-label="Help list"><i></i></button>
            <span class="gap"></span>${wbtn("min")}${wbtn("restore")}${wbtn("close")}
          </div>
        </div>
        <div class="row">
          <nav>${MENUS.map((m) => `<button>${m}</button>`).join("")}</nav>
          ${wbtn("min")}${wbtn("restore")}${wbtn("close")}
        </div>
      </div>
    `;
  }
}
customElements.define("title-bar", TitleBar);

// ---------------------------------------------------------------- scrollbars
class ScrollStrip extends HTMLElement {
  constructor() {
    super();
    this.attachShadow({ mode: "open" });
    this.shadowRoot.innerHTML = `
      <style>
        :host {
          display: flex;
          height: 16px;
          background: repeating-conic-gradient(#fff 0 25%, #d4d0c8 0 50%) 0 0 / 2px 2px;
        }
        :host([vertical]) { flex-direction: column; width: 16px; height: auto; }
        button, .thumb { flex: none; box-sizing: border-box; padding: 0; width: 16px; height: 16px; background: #d4d0c8; border: 1px solid; border-color: #fff #404040 #404040 #fff; box-shadow: inset -1px -1px #808080; display: flex; align-items: center; justify-content: center; }
        .before { flex: none; height: var(--before, 0); }
        .thumb { width: var(--thumb, 16px); }
        :host([vertical]) .thumb { width: 16px; }
        .fill { flex: 1; }
        svg { width: 8px; height: 8px; }
        :host([vertical]) svg { transform: rotate(90deg); }
      </style>
      <button aria-label="Scroll back"><svg viewBox="0 0 8 8"><path d="M6 0v8L2 4z"/></svg></button>
      <span class="before"></span><span class="thumb"></span><span class="fill"></span>
      <button aria-label="Scroll forward"><svg viewBox="0 0 8 8"><path d="M2 0v8l4-4z"/></svg></button>
    `;
  }
}
customElements.define("scroll-strip", ScrollStrip);

// ---------------------------------------------------------------- External References
class XrefPalette extends HTMLElement {
  constructor() {
    super();
    this.attachShadow({ mode: "open" });
  }

  connectedCallback() {
    this.shadowRoot.innerHTML = `
      <style>
        * { box-sizing: border-box; }
        :host {
          position: relative;
          z-index: 1;
          flex: none;
          width: 407px;
          box-sizing: border-box;
          margin: 2px 0 -4px;
          display: flex;
          flex-direction: column;
          background: #f0f0f0;
          border: 5px solid #000;
          border-left-width: 4px;
        }
        h2, h3 { margin: 0; font-size: 11px; font-weight: bold; }
        h2 { padding-left: 7px; height: 13px; line-height: 11px; background: #a0a0a0; }
        h3 {
          display: flex;
          align-items: center;
          gap: 2px;
          height: 19px;
          padding: 0 3px 0 4px;
          background: linear-gradient(#b6b6b6, #9a9a9a);
          border: 1px solid #8c8c8c;
        }
        h3 span { flex: 1; }
        button { display: flex; align-items: center; justify-content: center; padding: 0; border: 0; background: none; }
        .tools { display: flex; align-items: center; padding: 2px 0 2px 4px; }
        .tools button { height: 25px; width: 24px; border: 1px solid #c4c0b6; border-right-width: 0; }
        .tools button:last-of-type { border-right-width: 1px; }
        .tools .wide { width: 34px; gap: 4px; }
        .wide i { border: 4px solid transparent; border-top-color: #888; border-bottom-width: 0; }
        .arrow { width: 86px; height: 44px; margin-left: 15px; }
        .files { flex: 1; min-height: 0; display: flex; flex-direction: column; margin: 0 5px 0 4px; background: #fff; border: 1px solid #c4c0b6; border-top: 0; }
        .list { flex: 1; overflow: hidden; }
        table { border-collapse: collapse; table-layout: fixed; width: 100%; white-space: nowrap; }
        .list table { min-width: 388px; }
        th { height: 16px; padding: 0 0 0 5px; text-align: left; font-weight: normal; background: #d4d0c8; border: 1px solid; border-color: #fff #808080 #404040 #fff; }
        .list td { height: 18px; padding: 0 0 0 5px; }
        .list td:first-child { padding: 0; }
        .list td:last-child, th:last-child { padding-left: 3px; }
        th i { display: inline-block; margin: 0 0 2px 10px; border: 4px solid transparent; border-bottom-color: #888; border-top-width: 0; }
        .split { height: 13px; display: flex; flex-direction: column; align-items: center; justify-content: center; gap: 2px; }
        .split i { border: 4px solid transparent; border-bottom-color: #888; border-top-width: 0; }
        .split i + i { border-top: 4px solid #888; border-bottom: 0; }
        .details { margin: 0 5px 40px 4px; }
        .details td { height: 18px; border: 1px solid #d4d0c8; }
        .details tr:last-child td { height: 11px; }
        .up { width: 20px; }
        .up i { border: 4px solid transparent; border-bottom-color: #000; border-top-width: 0; }
      </style>
      <h2>External References</h2>
      <div class="tools">
        <button class="wide" aria-label="Attach DWG">${icon("attach")}<i></i></button>
        <button class="wide" aria-label="Refresh">${icon("refresh")}<i></i></button>
        <button aria-label="Help">${icon("balloon")}</button>
        <svg class="arrow" viewBox="0 0 86 44"><path fill="#f0f0f0" stroke="#000" stroke-width="5" d="M5 22L43 5v9h39v17H43v9z"/></svg>
      </div>
      <section class="files">
        <h3><span>File References</span><button aria-label="List view">${icon("listview")}</button><button aria-label="Tree view">${icon("tree")}</button></h3>
        <div class="list">
          <table>
            <colgroup><col style="width:17px"><col style="width:96px"><col style="width:72px"><col style="width:59px"><col style="width:72px"><col></colgroup>
            <thead><tr><th></th><th>Referen...<i></i></th><th>Status</th><th>Size</th><th>Type</th><th>Date</th></tr></thead>
            <tbody><tr><td>${icon("dwgfile")}</td><td>TEST*</td><td style="padding-left:24px">Opened</td><td>1.56 MB</td><td>Current</td><td>8/14/2015 7:0</td></tr></tbody>
          </table>
        </div>
        <scroll-strip style="--thumb:280px"></scroll-strip>
      </section>
      <div class="split"><i></i><i></i></div>
      <section class="details">
        <h3><span>Details</span><button aria-label="Details">${icon("detail")}</button><button aria-label="Preview">${icon("detailprev")}</button><button class="up" aria-label="Collapse"><i></i></button></h3>
        <table>
          <colgroup><col style="width:82px"><col></colgroup>
          <tbody>${"<tr><td></td><td></td></tr>".repeat(8)}</tbody>
        </table>
      </section>
    `;
  }
}
customElements.define("xref-palette", XrefPalette);

// ---------------------------------------------------------------- model space
const WHITE = "#ffffff", RED = "#ff0000", GREEN = "#00ff00", MAGENTA = "#ff00ff", CYAN = "#00ffff", YELLOW = "#ffff00";
const GRAY = "#5f6164", GRID = "#282e39", GRID_MAJOR = "#323949";
const LAYER_ORDER = [GRID, GRID_MAJOR, GRAY, RED, GREEN, WHITE, MAGENTA, CYAN, YELLOW];

class FloorPlans extends HTMLElement {
  constructor() {
    super();
    this.attachShadow({ mode: "open" });
    this.layers = {};
    this.extra = "";
  }

  box(c, x, y, w, h) {
    this.layers[c] = (this.layers[c] || "") + `<rect x="${Math.round(x)}" y="${Math.round(y)}" width="${w}" height="${h}"/>`;
  }
  h(c, x1, x2, y, t = 1) { this.box(c, x1, y, Math.round(x2) - Math.round(x1), t); }
  v(c, x, y1, y2, t = 1) { this.box(c, x, y1, t, y2 - y1); }
  frame(c, x, y, w, h) {
    this.h(c, x, x + w, y); this.h(c, x, x + w, y + h - 1);
    this.v(c, x, y, y + h); this.v(c, x + w - 1, y, y + h);
  }

  bubble(x, y, text) {
    this.extra += `<circle cx="${x}" cy="${y}" r="4.5"/><text x="${x}" y="${y + 3}">${text}</text>`;
    this.v(WHITE, x, y + 5, y + 8);
  }
  solidBubble(x, y) {
    this.box(WHITE, x - 2, y - 3, 5, 1); this.box(WHITE, x - 2, y + 3, 5, 1);
    this.box(WHITE, x - 3, y - 2, 2, 5); this.box(WHITE, x + 2, y - 2, 2, 5);
    this.h(WHITE, x - 4, x + 5, y); this.v(WHITE, x, y - 4, y + 5);
  }
  // workstation: magenta desk with a cyan seat above or below it
  desk(x, y, below) {
    this.box(MAGENTA, x, y, 5, 4);
    this.box(CYAN, x + 1, y + 1, 2, 2);
    if (below) { this.box(CYAN, x + 1, y + 4, 3, 4); this.box(CYAN, x + 3, y + 6, 2, 3); }
    else { this.box(CYAN, x + 1, y - 5, 2, 5); this.box(CYAN, x - 1, y - 2, 3, 2); }
  }
  chair(x, y) { this.box(MAGENTA, x, y, 4, 3); this.box(MAGENTA, x - 1, y + 2, 3, 3); }
  plant(x, y, c) { this.box(c, x, y, 7, 3); this.box(c, x + 1, y + 3, 1, 1); this.box(c, x + 3, y + 3, 1, 1); this.box(c, x + 5, y + 3, 1, 1); }

  stairs(x, y, w, h) {
    for (let i = 0; i < w; i += 3) this.v(WHITE, x + i, y, y + h, 2);
    this.h(WHITE, x - 9, x + w, y); this.h(WHITE, x - 9, x + w, y + h - 2, 2);
    this.frame(WHITE, x - 6, y + 6, 6, 12);
  }

  grid() {
    for (let x = 456; x < 1900; x += 32) this.v((x - 552) % 160 ? GRID : GRID_MAJOR, x, 100, 1400);
    for (let y = 130; y < 1400; y += 32) this.h((y - 162) % 160 ? GRID : GRID_MAJOR, 440, 1900, y);
  }

  // offices without furniture; repeats down the right side of the sheet
  emptyFloor(d) {
    const cols = [818, 856, 893, 930, 967, 1004];
    const bays = [846, 874, 902, 920, 948, 976, 994, 1014];
    cols.forEach((x, i) => {
      this.bubble(x, 160.5 + d, i + 1);
      this.v(GRAY, x, 170 + d, 317 + d);
      this.v(RED, x, 166 + d, 176 + d);
    });
    [166, 170, 319, 324].forEach((y) => this.h(RED, 818, 1040, y + d));
    this.v(RED, 818, 298 + d, 325 + d);
    bays.forEach((x, i) => {
      this.v(RED, x, 170 + d, 186 + d);
      this.v(RED, x, 298 + d, 319 + d);
      this.box(WHITE, x - 14, 169 + d, 4, 2);
      this.box(WHITE, x - 14, 318 + d, 4, 2);
      if (i % 2) this.box(WHITE, x - 10, 164 + d, 4, 2);
    });
    this.box(WHITE, 983, 323 + d, 4, 3);
    [188, 218, 228, 254, 264, 294].forEach((y) => this.h(GRAY, 802, 1040, y + d));
    this.v(RED, 798, 189 + d, 295 + d); this.v(RED, 802, 189 + d, 295 + d);
    [189, 218, 228, 254, 264, 294].forEach((y) => this.h(RED, 798, 807, y + d));
    [202, 222, 240, 258, 277].forEach((y) => this.box(WHITE, 801, y + d, 2, 4));
    this.box(WHITE, 796, 239 + d, 3, 5);
    // outer walls
    [186, 188, 294, 297].forEach((y) => this.h(WHITE, 817, 1040, y + d));
    this.v(WHITE, 819, 184 + d, 299 + d); this.v(WHITE, 818, 190 + d, 292 + d);
    for (let x = 828; x < 1040; x += 9) this.v(WHITE, x, 294 + d, 298 + d);
    // rooms
    [847, 902, 921, 975, 995].forEach((x, i) => {
      const t = i === 2 ? 2 : 1;
      this.v(WHITE, x, 189 + d, 219 + d, t);
      this.v(WHITE, x, 265 + d, 294 + d, t);
    });
    this.v(WHITE, 958, 268 + d, 294 + d);
    [[819, 844], [850, 872], [878, 899], [906, 944], [950, 972], [978, 992], [998, 1040]].forEach(([a, b]) => {
      this.h(WHITE, a, b, 219 + d); this.h(WHITE, a, b, 265 + d); this.h(WHITE, a, b, 255 + d);
    });
    this.h(WHITE, 819, 1014, 229 + d);
    this.h(WHITE, 902, 920, 213 + d); this.h(WHITE, 976, 994, 213 + d);
    this.h(WHITE, 902, 920, 270 + d); this.h(WHITE, 976, 994, 270 + d);
    [828, 856, 885, 932, 957, 1003].forEach((x, i) => {
      this.box(WHITE, x, 202 + d, 8 + (i % 3) * 2, 2); this.box(WHITE, x + 2, 204 + d, 4, 1);
      this.box(WHITE, x, 278 + d, 8 + (i % 2) * 4, 2);
    });
    this.box(WHITE, 906, 202 + d, 11, 2); this.box(WHITE, 910, 205 + d, 3, 2);
    this.box(WHITE, 980, 200 + d, 11, 3);
    this.box(WHITE, 908, 278 + d, 8, 2); this.box(WHITE, 981, 278 + d, 11, 2);
    // service core
    this.v(WHITE, 836, 229 + d, 254 + d);
    this.stairs(885, 230 + d, 16, 24);
    [911, 915, 928, 930, 945].forEach((x) => this.v(WHITE, x, 229 + d, 255 + d));
    this.box(WHITE, 918, 240 + d, 7, 2); this.box(WHITE, 853, 240 + d, 8, 2); this.box(WHITE, 826, 240 + d, 3, 2); this.box(WHITE, 983, 240 + d, 5, 2);
    this.frame(WHITE, 955, 230 + d, 12, 25); this.v(WHITE, 956, 230 + d, 254 + d);
    this.frame(WHITE, 957, 239 + d, 20, 15); this.box(WHITE, 959, 234 + d, 5, 2);
    this.frame(WHITE, 1003, 230 + d, 13, 11); this.frame(WHITE, 1003, 243 + d, 13, 12); this.v(WHITE, 1004, 230 + d, 254 + d);
    cols.slice(0, 3).forEach((x) => [227, 253].forEach((y) => this.frame(WHITE, x - 2, y + d, 4, 4)));
  }

  sheetTitle(y) {
    this.h(WHITE, 828, 873, y, 3);
    for (let i = 0; i < 15; i++) if (i % 4) this.box(WHITE, 829 + i * 3, y - 1, 2, 4);
    this.box(WHITE, 829, y - 1, 10, 6);
  }

  // walls, dimensions and column grid shared by the left side
  leftShell(d, dim, stub) {
    const cols = [458, 495, 532, 569, 606, 643];
    cols.forEach((x) => this.v(GRAY, x, 164 + d, 317 + d));
    [449, 467, 486, 504, 523, 541, 560, 578, 597, 615, 634].forEach((x, i) => {
      this.v(i % 3 ? GRAY : stub, x, 170 + d, 186 + d);
      this.v(GRAY, x, 298 + d, 318 + d);
    });
    for (let x = 446; x < 640; x += 19) { this.box(WHITE, x, 165 + d + (x % 2) * 4, 5, 2); this.box(WHITE, x + 4, 318 + d, 4, 2); }
    [188, 218, 228, 254, 264, 294].forEach((y) => this.h(GRAY, 440, 658, y + d));
    [186, 188, 294, 297].forEach((y) => this.h(WHITE, 440, 645, y + d));
    for (let x = 446; x < 643; x += 9) { this.v(WHITE, x, 186 + d, 189 + d); this.v(WHITE, x, 294 + d, 298 + d); }
    this.v(WHITE, 643, 184 + d, 298 + d);
    this.v(dim, 656, 188 + d, 296 + d);
    [202, 240, 275].forEach((y) => this.box(WHITE, 655, y + d, 2, 5));
    [187, 229, 254, 295].forEach((y) => this.frame(WHITE, 641, y - 2 + d, 5, 5));
  }

  core(d) {
    this.frame(WHITE, 445, 229 + d, 14, 25); this.frame(WHITE, 447, 233 + d, 10, 12); this.box(WHITE, 450, 236 + d, 5, 2);
    this.frame(WHITE, 494, 229 + d, 14, 12); this.frame(WHITE, 494, 242 + d, 14, 12); this.v(WHITE, 506, 229 + d, 253 + d, 2);
    this.h(WHITE, 516, 552, 229 + d); this.h(WHITE, 516, 552, 253 + d); this.h(WHITE, 518, 545, 238 + d, 2); this.h(WHITE, 520, 545, 246 + d);
    this.stairs(562, 230 + d, 16, 23);
    this.h(WHITE, 552, 590, 229 + d); this.frame(WHITE, 553, 230 + d, 36, 24); this.box(YELLOW, 583, 232 + d, 3, 6); this.box(YELLOW, 588, 244 + d, 3, 8);
    for (let i = 0; i < 10; i++) {
      this.box(CYAN, 519 + i * 3, 230 + d + (i * 5) % 9, 2, 4); this.box(CYAN, 520 + i * 3, 244 + d + (i * 3) % 7, 2, 3);
      this.box(i % 3 ? RED : MAGENTA, 517 + i * 3, 236 + d + (i * 7) % 14, 4, 2);
      if (i % 4 === 1) this.box(YELLOW, 520 + i * 3, 231 + d + i, 3, 2);
    }
    this.h(RED, 513, 555, 233 + d); this.v(RED, 513, 226 + d, 258 + d); this.h(RED, 517, 584, 246 + d); this.v(RED, 555, 226 + d, 258 + d);
  }

  furnishedFloor() {
    [458, 495, 532, 569, 606, 643].forEach((x) => this.solidBubble(x, 158));
    this.leftShell(0, GREEN, GRAY);
    [166, 170, 319, 324].forEach((y) => this.h(GREEN, 440, 644, y));
    [187, 229, 254, 295].forEach((y) => this.solidBubble(666, y));
    [[440, 552], [556, 644]].forEach(([a, b]) => { this.h(WHITE, a, b, 219); this.h(WHITE, a, b, 265); });
    [440, 485, 514, 560, 588].forEach((x) => { this.v(WHITE, x, 188, 219); this.v(WHITE, x, 265, 294); });
    for (let i = 0; i < 22; i++) {
      const x = 442 + i * 9.2;
      [196, 209, 272, 286].forEach((y) => {
        this.desk(x, y);
        if (i % 2 === 0) this.h(RED, x, x + 12, y + 2);
      });
      if (i % 3 === 2) { this.v(RED, x + 1, 198, 224); this.v(RED, x + 1, 258, 288); }
      if (i % 4 === 1) { this.box(WHITE, x - 2, 203, 8, 2); this.box(WHITE, x, 279, 6, 2); }
    }
    [223, 226, 259, 262].forEach((y) => this.h(RED, 441, 636, y));
    [451, 464, 473, 482, 491, 504, 521, 537, 553, 572, 587, 606, 617, 636].forEach((x) => { this.chair(x, 221); this.chair(x, 257); });
    [464, 473, 482, 491].forEach((x) => { this.chair(x, 232); this.chair(x, 246); this.v(RED, x, 223, 260); });
    [454, 496, 524, 547, 573, 606, 626].forEach((x) => this.plant(x, 219, GREEN));
    [440, 461, 487, 514, 533, 572, 598, 627].forEach((x) => this.plant(x, 262, GREEN));
    [453, 491, 519, 546, 565, 592, 620].forEach((x) => this.plant(x, 215, YELLOW));
    [458, 473, 492, 520, 548, 567, 594, 622].forEach((x, i) => this.plant(x, i % 3 === 1 ? 270 : 265, YELLOW));
    this.core(0);
    [594, 602, 611, 619, 630, 638].forEach((x) => { this.desk(x, 236); this.desk(x, 248); this.h(RED, x - 3, x + 8, 247); });
    [608, 625].forEach((x) => this.v(WHITE, x, 229, 254, 2));
    this.h(WHITE, 590, 643, 229); this.h(WHITE, 590, 643, 254);
  }

  diningFloor() {
    [458, 495, 532, 569, 606, 643].forEach((x) => { this.solidBubble(x, 347); this.v(GRAY, x, 352, 400); });
    [523, 551, 624].forEach((x) => this.v(GRAY, x, 362, 400));
    [401, 442, 468, 509].forEach((y) => { this.solidBubble(666, y); this.h(GRAY, 440, 658, y); this.frame(WHITE, 641, y - 2, 5, 5); });
    this.h(GREEN, 440, 644, 354); this.h(GREEN, 458, 644, 362);
    for (let x = 476; x < 640; x += 37) { this.box(WHITE, x, 353, 4, 2); this.box(WHITE, x + 14, 361, 4, 2); }
    this.v(WHITE, 643, 398, 512); this.v(RED, 656, 402, 510);
    [414, 452, 486].forEach((y) => this.box(WHITE, 655, y, 2, 5));
    [400, 403, 408].forEach((y) => this.h(WHITE, 440, 643, y));
    this.h(RED, 440, 640, 406);
    [502, 507, 511].forEach((y) => this.h(WHITE, 440, 644, y));
    for (let x = 446; x < 640; x += 9) { this.v(WHITE, x, 403, 408); this.v(WHITE, x, 502, 507); }
    // projecting bay
    this.frame(WHITE, 460, 367, 34, 48); this.frame(WHITE, 461, 368, 32, 47);
    [372, 388, 403].forEach((y) => {
      [464, 472, 480, 487].forEach((x) => { this.box(CYAN, x, y - 2, 2, 6); this.box(CYAN, x + 1, y - 1, 2, 2); this.box(MAGENTA, x, y + 3, 1, 1); });
      this.h(RED, 464, 489, y + 1);
    });
    this.v(RED, 488, 372, 405);
    this.h(RED, 440, 644, 533); this.h(RED, 440, 644, 537);
    [467, 486, 523, 578, 634].forEach((x) => this.v(RED, x, 508, 534));
    [458, 495, 532, 569, 606].forEach((x) => { this.v(GRAY, x, 512, 531); this.box(WHITE, x + 16, 532, 4, 2); });
    this.v(WHITE, 588, 502, 519); this.box(CYAN, 583, 502, 2, 16); this.box(MAGENTA, 584, 504, 3, 4); this.v(RED, 583, 475, 516);
    // long table rows
    [416, 433, 476, 492].forEach((y) => {
      for (let i = 0; i < 11; i++) {
        const x = 525 + i * 7.5;
        this.frame(MAGENTA, x, y, 4, 6);
        this.box(CYAN, x, y + 5, 4, 2); this.box(CYAN, x + 1, y + 6, 2, 2);
      }
      this.h(RED, 525, 604, y + 2);
    });
    this.h(WHITE, 556, 566, 413, 2); this.box(WHITE, 542, 485, 15, 3);
    this.h(RED, 500, 614, 473, 2); this.h(RED, 564, 604, 440); this.v(RED, 564, 416, 440); this.v(RED, 604, 420, 474); this.v(RED, 611, 420, 474);
    // west offices
    for (let r = 0; r < 3; r++) {
      [443, 451].forEach((x) => this.desk(x, 413 + r * 10));
      this.h(RED, 441, 455, 415 + r * 10);
    }
    this.v(WHITE, 458, 408, 432); this.h(WHITE, 458, 492, 419); this.v(WHITE, 494, 408, 440); this.v(WHITE, 523, 410, 431);
    [424, 435, 448, 459, 471].forEach((y) => {
      [465, 473, 481, 489].forEach((x) => this.chair(x, y));
      this.h(RED, 464, 492, y + 2);
    });
    [464, 473, 489, 512].forEach((x) => this.v(RED, x, 424, 474));
    [500, 511].forEach((x) => { this.chair(x, 435); this.chair(x, 452); this.chair(x, 471); });
    this.h(RED, 440, 520, 472);
    [412, 426].forEach((y) => [499, 506, 513, 519].forEach((x) => this.desk(x, y)));
    this.plant(496, 419, YELLOW); this.h(WHITE, 494, 504, 434, 2);
    [448, 475, 505].forEach((x) => this.plant(x, 476, GREEN));
    [442, 449, 456, 470, 478, 486, 498, 506, 515].forEach((x) => { this.desk(x, 485); this.desk(x, 492, true); this.h(RED, x - 2, x + 8, 488); });
    [486, 522].forEach((x) => this.v(WHITE, x, 479, 501)); this.h(WHITE, 440, 522, 478);
    this.core(214);
    // east wing
    [414, 424, 434, 446, 456, 466, 486, 496].forEach((y) => {
      this.desk(628, y); this.desk(637, y); this.box(MAGENTA, 616, y, 7, 3); this.box(CYAN, 616, y + 3, 5, 2);
    });
    [594, 609].forEach((x) => [444, 453, 462].forEach((y) => this.desk(x, y)));
    [614, 624].forEach((x) => this.v(WHITE, x, 410, 502)); this.v(RED, 620, 412, 500); this.v(RED, 631, 412, 496);
    this.box(YELLOW, 625, 438, 4, 4); this.box(YELLOW, 627, 455, 3, 4); this.box(YELLOW, 630, 480, 4, 3); this.box(YELLOW, 634, 491, 4, 4);
    this.h(WHITE, 604, 643, 483); this.v(WHITE, 606, 408, 424);
  }

  lowerFloor() {
    [458, 495, 532, 569, 606, 643].forEach((x, i) => { this.bubble(x, 588.5, i + 5); this.v(GRAY, x, 598, 666); });
    [593, 597].forEach((y) => this.h(RED, 440, 644, y));
    [476, 523, 597].forEach((x) => this.v(RED, x, 597, 615));
    for (let x = 475; x < 640; x += 37) { this.box(WHITE, x, 592, 4, 2); this.box(WHITE, x + 20, 596, 4, 2); }
    this.h(WHITE, 440, 643, 615); this.h(WHITE, 440, 643, 617);
    this.v(WHITE, 642, 612, 666); this.v(WHITE, 643, 612, 666);
    [458, 495, 532, 569, 606].forEach((x) => this.frame(WHITE, x - 2, 613, 5, 5));
    this.h(WHITE, 440, 606, 646, 2); this.h(WHITE, 606, 643, 656);
    for (let i = 0; i < 22; i++) {
      const x = 441 + i * 9.2;
      this.desk(x, 625, true); this.desk(x, 637, true);
      if (i > 16) this.desk(x, 649);
      if (i % 2) { this.h(RED, x - 6, x + 6, 627); this.h(RED, x - 6, x + 6, 639); }
      if (i % 3 === 1) this.v(RED, x + 2, 627, 648);
      if (i % 5 === 4) this.box(WHITE, x, 630, 14, 2);
    }
    [477, 523, 597].forEach((x) => this.v(WHITE, x, 617, 646, 2));
    [461, 489, 516, 543, 569, 599, 622].forEach((x, i) => this.plant(x, i > 5 ? 654 : 644, GREEN));
    [453, 465, 474, 482, 491, 503, 531, 554, 572, 591].forEach((x) => this.chair(x, 648));
    [464, 473, 482, 489].forEach((x) => { this.v(RED, x, 649, 666); this.chair(x, 661); });
    this.h(RED, 440, 606, 650); this.h(WHITE, 516, 592, 657, 2);
    this.core(428);
    [594, 604, 614, 624, 634].forEach((x) => this.desk(x, 662));
    this.bubble(662, 615.5, "B"); this.bubble(662, 656.5, "C");
    this.v(RED, 656, 615, 666); this.box(WHITE, 655, 634, 2, 4);
    this.h(RED, 648, 658, 615); this.h(RED, 648, 658, 656);
  }

  connectedCallback() {
    this.grid();
    // dimension strings of the sheets above
    [105, 110].forEach((y) => { this.h(RED, 440, 644, y); this.h(RED, 818, 1040, y); });
    for (let x = 456; x < 640; x += 26) this.box(WHITE, x, 104, 4, 2);
    for (let x = 831; x < 1040; x += 26) { this.box(WHITE, x, 104, 4, 2); this.v(RED, x + 15, 102, 106); }
    this.v(RED, 818, 102, 111); this.box(WHITE, 474, 109, 5, 2); this.box(WHITE, 983, 109, 5, 2);
    this.furnishedFloor();
    this.diningFloor();
    this.lowerFloor();
    [0, 214, 428].forEach((d) => this.emptyFloor(d));
    [120, 334, 547].forEach((y) => this.sheetTitle(y));

    this.shadowRoot.innerHTML = `
      <style>
        :host { display: block; background: #212830; overflow: hidden; }
        svg { display: block; width: 100%; height: 100%; }
        .tags { fill: none; stroke: #fff; }
        .tags text { font: bold 7px "Liberation Sans", sans-serif; fill: #fff; stroke: none; text-anchor: middle; }
        .letters { font: bold 16px "Liberation Sans", sans-serif; fill: #b5b7ba; text-anchor: middle; }
        .label { font: 12px "Open Sans", "Liberation Sans", sans-serif; fill: #d0d2d4; }
      </style>
      <svg role="img" aria-label="Floor plans">
        <g transform="translate(-440 -102)">
          ${LAYER_ORDER.map((c) => `<g fill="${c}">${this.layers[c] || ""}</g>`).join("")}
          <g class="tags">${this.extra}</g>
          <g fill="none" stroke="#fff">
            <path d="M518.5 576v31M518.5 614v32M484 610.5h31M522 610.5h31M515.5 607.5h6v6h-6z"/>
            <path d="M455.5 599v49M460 649.5h52M451.5 645.5h9v8h-9z"/>
            <path d="M458 582l5 6 7-6M463.5 588v7M511 635l8 10M519 635l-8 10"/>
          </g>
          <circle cx="953" cy="166" r="43" fill="none" stroke="#8f939b" stroke-opacity=".36" stroke-width="9"/>
          <path fill="#b9bbbd" fill-opacity=".85" stroke="#d0d0d0" stroke-opacity=".6" d="M932.5 145.5h41v41h-41z"/>
          <path fill="#9a9fa5" fill-opacity=".7" d="M940 153h26v26h-26z"/>
          <text x="953" y="170" font-size="11" font-weight="bold" fill="#4b4f55" text-anchor="middle" font-family="Liberation Sans, sans-serif">TOP</text>
          <g class="letters"><text x="953" y="128">N</text><text x="953" y="217">S</text><text x="908" y="172">W</text><text x="998" y="172">E</text></g>
          <rect x="929" y="236" width="46" height="17" rx="4" fill="#a9adc0" fill-opacity=".6"/>
          <text x="933" y="248" font-size="11" fill="#5a5e68" font-family="Liberation Sans, sans-serif">WCS</text>
          <path fill="none" stroke="#c5c8d2" d="M963 242l4 4 4-4"/>
          <text class="label" x="444" y="119">[–][Top][2D Wireframe]</text>
        </g>
      </svg>
    `;
  }
}
customElements.define("floor-plans", FloorPlans);

class DrawingWindow extends HTMLElement {
  constructor() {
    super();
    this.attachShadow({ mode: "open" });
  }

  connectedCallback() {
    const nav = (label, d) => `<button class="nav" aria-label="${label}"><svg viewBox="0 0 10 10"><path d="${d}"/></svg></button>`;
    this.shadowRoot.innerHTML = `
      <style>
        * { box-sizing: border-box; }
        :host { box-sizing: border-box; display: flex; flex-direction: column; border: 2px solid; border-color: #55575c #fff #fff #55575c; background: #d4d0c8; }
        .view { flex: 1; min-height: 0; display: flex; }
        floor-plans { flex: 1; min-width: 0; }
        .foot { display: flex; align-items: stretch; height: 16px; padding-right: 16px; }
        .nav { width: 15px; padding: 0; background: #d4d0c8; border: 1px solid; border-color: #fff #808080 #808080 #fff; display: flex; align-items: center; justify-content: center; }
        .nav svg { width: 10px; height: 10px; fill: #8a8a8a; }
        .tabs { display: flex; flex: 1; padding-left: 3px; }
        .tab { position: relative; border: 0; padding: 0 8px; background: none; font-family: inherit; font-size: 11px; line-height: 16px; color: #000; }
        .tab svg { position: absolute; inset: 0; width: 100%; height: 100%; overflow: visible; }
        .tab span { position: relative; }
        .tab[aria-selected=true] { color: #fff; z-index: 1; }
        .foot scroll-strip { width: 191px; }
        .handle { width: 5px; border: 1px solid; border-color: #fff #404040 #404040 #fff; }
      </style>
      <div class="view">
        <floor-plans></floor-plans>
        <scroll-strip vertical style="--before:53px"></scroll-strip>
      </div>
      <div class="foot">
        ${nav("First", "M1 0h1v10H1zM8 0v10L3 5z")}${nav("Previous", "M8 0v10L2 5z")}${nav("Next", "M2 0v10l6-5z")}${nav("Last", "M8 0h1v10H8zM2 0v10l5-5z")}
        <div class="tabs" role="tablist">
          ${["Model", "Layout1", "Layout3"].map((t, i) => `
            <button class="tab" role="tab" aria-selected="${i === 0}">
              <svg viewBox="0 0 50 16" preserveAspectRatio="none"><path fill="${i ? "#d4d0c8" : "#212830"}" stroke="#333" d="M-3 0l6 15.5h43L53 0"/></svg>
              <span>${t}</span>
            </button>`).join("")}
        </div>
        <span class="handle"></span>
        <scroll-strip></scroll-strip>
      </div>
    `;
  }
}
customElements.define("drawing-window", DrawingWindow);

// ---------------------------------------------------------------- command line
class CommandLine extends HTMLElement {
  constructor() {
    super();
    this.attachShadow({ mode: "open" });
  }

  connectedCallback() {
    this.shadowRoot.innerHTML = `
      <style>
        * { box-sizing: border-box; }
        :host { box-sizing: border-box; flex: none; display: flex; height: 54px; margin-right: 2px; border: 1px solid #6c6e74; border-bottom: 0; font: 12px/15px "Liberation Mono", monospace; }
        .side { width: 22px; display: flex; flex-direction: column; align-items: center; background: linear-gradient(#808080, #3a3a3a); }
        .dots { width: 18px; height: 6px; margin-top: 3px; background: radial-gradient(circle, #ccc 35%, transparent 45%) 0 0 / 3px 3px; }
        button { display: flex; width: 20px; height: 22px; padding: 0; border: 0; background: none; align-items: center; justify-content: center; }
        button svg { width: 8px; height: 8px; stroke: #fff; stroke-width: 2.2; }
        .wrench cad-icon { width: 15px; height: 15px; }
        .body { flex: 1; display: flex; flex-direction: column; background: #fff; }
        .log { height: 34px; padding: 2px; background: #c8c8c8; border-bottom: 1px solid #808080; }
        label { flex: 1; display: flex; align-items: center; padding: 3px 0 0 4px; }
        label i { margin: 0 6px 0 4px; border: 3px solid transparent; border-top-color: #777; border-bottom-width: 0; }
        input { flex: 1; border: 0; padding: 0; font: inherit; outline: 0; background: none; }
        input::placeholder { color: #999; font-style: italic; }
      </style>
      <div class="side">
        <div class="dots"></div>
        <button aria-label="Close"><svg viewBox="0 0 10 10"><path d="M1 1l8 8M9 1L1 9"/></svg></button>
        <button class="wrench" aria-label="Customize">${icon("wrench")}</button>
      </div>
      <div class="body">
        <div class="log"><div>Command: XR</div><div>XREF</div></div>
        <label>${icon("prompt")}<i></i><input aria-label="Command" placeholder="Type a command"></label>
      </div>
    `;
  }
}
customElements.define("command-line", CommandLine);

// ---------------------------------------------------------------- Properties
// third entry marks a read-only value
const GROUPS = [
  ["General", [["Color", '<i class="sw"></i>ByLayer'], ["Layer", "Tembok"], ["Linetype", '<i class="ln"></i>Continuous'], ["Linetype scale", "1"], ["Lineweight", '<i class="ln"></i>ByLayer'], ["Transparency", "ByLayer"], ["Thickness", "0"]]],
  ["3D Visualization", [["Material", "ByLayer"], ["Shadow display", "Casts and Receives Sha..."]]],
  ["Plot style", [["Plot style", "ByColor", 1], ["Plot style table", "monochrome.ctb"], ["Plot table attached to", "Model", 1], ["Plot table type", "Color dependent", 1]]],
  ["View", [["Center X", "96881.1112", 1], ["Center Y", "81972.9919", 1], ["Center Z", "0", 1], ["Height", "109357.5533", 1], ["Width", "191862.1843", 1]]],
  ["Misc", [["Annotation scale", "1:1"], ["UCS icon On", "Yes"], ["UCS icon at origin", "Yes"], ["UCS per viewport", "Yes"], ["UCS Name", "", 1], ["Visual Style", "2D Wireframe"]]],
];

class PropertiesPalette extends HTMLElement {
  constructor() {
    super();
    this.attachShadow({ mode: "open" });
  }

  connectedCallback() {
    const group = ([name, rows]) => `
      <section>
        <h3><span>${name}</span><button aria-label="Collapse ${name}"><i></i></button></h3>
        <table>
          <colgroup><col style="width:114px"><col></colgroup>
          ${rows.map(([k, v, ro]) => `<tr><th scope="row">${k}</th><td${ro ? ' class="ro"' : ""}>${v}</td></tr>`).join("")}
        </table>
      </section>`;
    this.shadowRoot.innerHTML = `
      <style>
        * { box-sizing: border-box; }
        :host { box-sizing: border-box; flex: none; width: 294px; margin: 2px 0 0; display: flex; flex-direction: column; background: #a0a0a0; border-top-left-radius: 4px; overflow: hidden; }
        h2, h3 { margin: 0; font-size: 11px; font-weight: bold; }
        h2 { display: flex; align-items: center; gap: 3px; height: 18px; padding: 1px 0 0 3px; }
        h2 i { width: 5px; height: 12px; background: radial-gradient(circle, #ddd 35%, transparent 45%) 0 0 / 3px 3px; }
        .body { flex: 1; min-height: 0; padding: 9px 18px 0 10px; background: #f0f0f0; border-radius: 4px 4px 0 0; }
        .pick { display: flex; align-items: center; margin: 0 -8px 7px -2px; }
        .pick combo-box { flex: 1; height: 22px; }
        .pick .set { display: flex; margin-left: 4px; border: 1px solid #8c8c8c; }
        .set button { width: 25px; height: 24px; border-right: 1px solid #8c8c8c; }
        .set button:last-child { border-right: 0; }
        button { display: flex; align-items: center; justify-content: center; padding: 0; border: 0; background: none; }
        section { margin-bottom: 3px; }
        h3 { display: flex; align-items: center; height: 19px; padding: 0 8px 0 4px; background: linear-gradient(#b6b6b6, #9a9a9a); border: 1px solid #8c8c8c; }
        h3 span { flex: 1; }
        h3 i { border: 4px solid transparent; border-bottom-color: #000; border-top-width: 0; }
        table { width: calc(100% - 17px); margin: -1px 0 0 17px; border-collapse: collapse; table-layout: fixed; }
        th, td { height: 18px; padding: 0 0 1px 4px; border: 1px solid #8c8c8c; text-align: left; font-weight: normal; line-height: 14px; white-space: nowrap; }
        td { padding: 2px 0 0 2px; background: #fff; }
        .ro { background: #f0f0f0; }
        .sw { display: inline-block; width: 10px; height: 10px; margin: 0 5px 0 1px; border: 1px solid #000; vertical-align: -1px; }
        .ln { display: inline-block; width: 57px; height: 1px; margin: 0 5px 0 3px; background: #000; vertical-align: 4px; }
      </style>
      <h2><i></i>Properties</h2>
      <div class="body">
        <div class="pick">
          <combo-box label="Selection" value="No selection" style="--indent:0px"></combo-box>
          <div class="set">
            <button aria-label="Toggle PICKADD">${icon("quick")}</button><button aria-label="Select objects">${icon("selobj")}</button><button aria-label="Quick select">${icon("qselect")}</button>
          </div>
        </div>
        ${GROUPS.map(group).join("")}
      </div>
    `;
  }
}
customElements.define("properties-palette", PropertiesPalette);

// ---------------------------------------------------------------- task bar
class TaskBar extends HTMLElement {
  constructor() {
    super();
    this.attachShadow({ mode: "open" });
  }

  connectedCallback() {
    const apps = [["outlook", 1], ["remote"], ["explorer"], ["chrome", 1], ["apps"], ["gstar", 1], ["excel", 1], ["acad", 2], ["paint", 1], ["chat", 3]];
    this.shadowRoot.innerHTML = `
      <style>
        * { box-sizing: border-box; }
        :host { box-sizing: border-box; flex: none; display: flex; align-items: center; height: 27px; padding: 1px 2px 0; background: #d4d0c8; border-top: 1px solid #fff; }
        button { display: flex; align-items: center; justify-content: center; height: 24px; padding: 0; border: 1px solid transparent; background: none; color: #000; font: inherit; }
        .start { gap: 1px; width: 52px; font-weight: bold; }
        .start, .open { border-color: #fff #404040 #404040 #fff; box-shadow: inset -1px -1px #808080; }
        .apps { display: flex; gap: 2px; flex: 1; padding-left: 9px; }
        .apps button { width: 32px; }
        .stack { border-right-width: 3px; border-right-style: double; }
        .apps .active { background: #0a246a; }
        .tray { display: flex; align-items: center; gap: 8px; height: 24px; padding: 0 2px; border: 1px solid; border-color: #808080 #fff #fff #808080; }
        .time { padding: 0 2px 0 8px; }
        .rule { width: 2px; height: 22px; margin: 0 4px; border-left: 1px solid #808080; background: #fff; }
      </style>
      <button class="start">${icon("winflag")}Start</button>
      <div class="apps">
        ${apps.map(([n, s]) => `<button aria-label="${n}" class="${s ? "open" : ""} ${s === 2 ? "stack" : ""} ${s === 3 ? "active" : ""}">${icon(n)}</button>`).join("")}
      </div>
      <span>EN</span><i class="rule"></i>${icon("keyboard")}<i class="rule"></i>
      <div class="tray">
        ${["chevrons", "action", "signal", "speaker", "power", "people"].map((n) => icon(n)).join("")}
        <span class="time">1:44 PM</span>${icon("desktop")}
      </div>
    `;
  }
}
customElements.define("task-bar", TaskBar);
</script>
</body>
</html>
